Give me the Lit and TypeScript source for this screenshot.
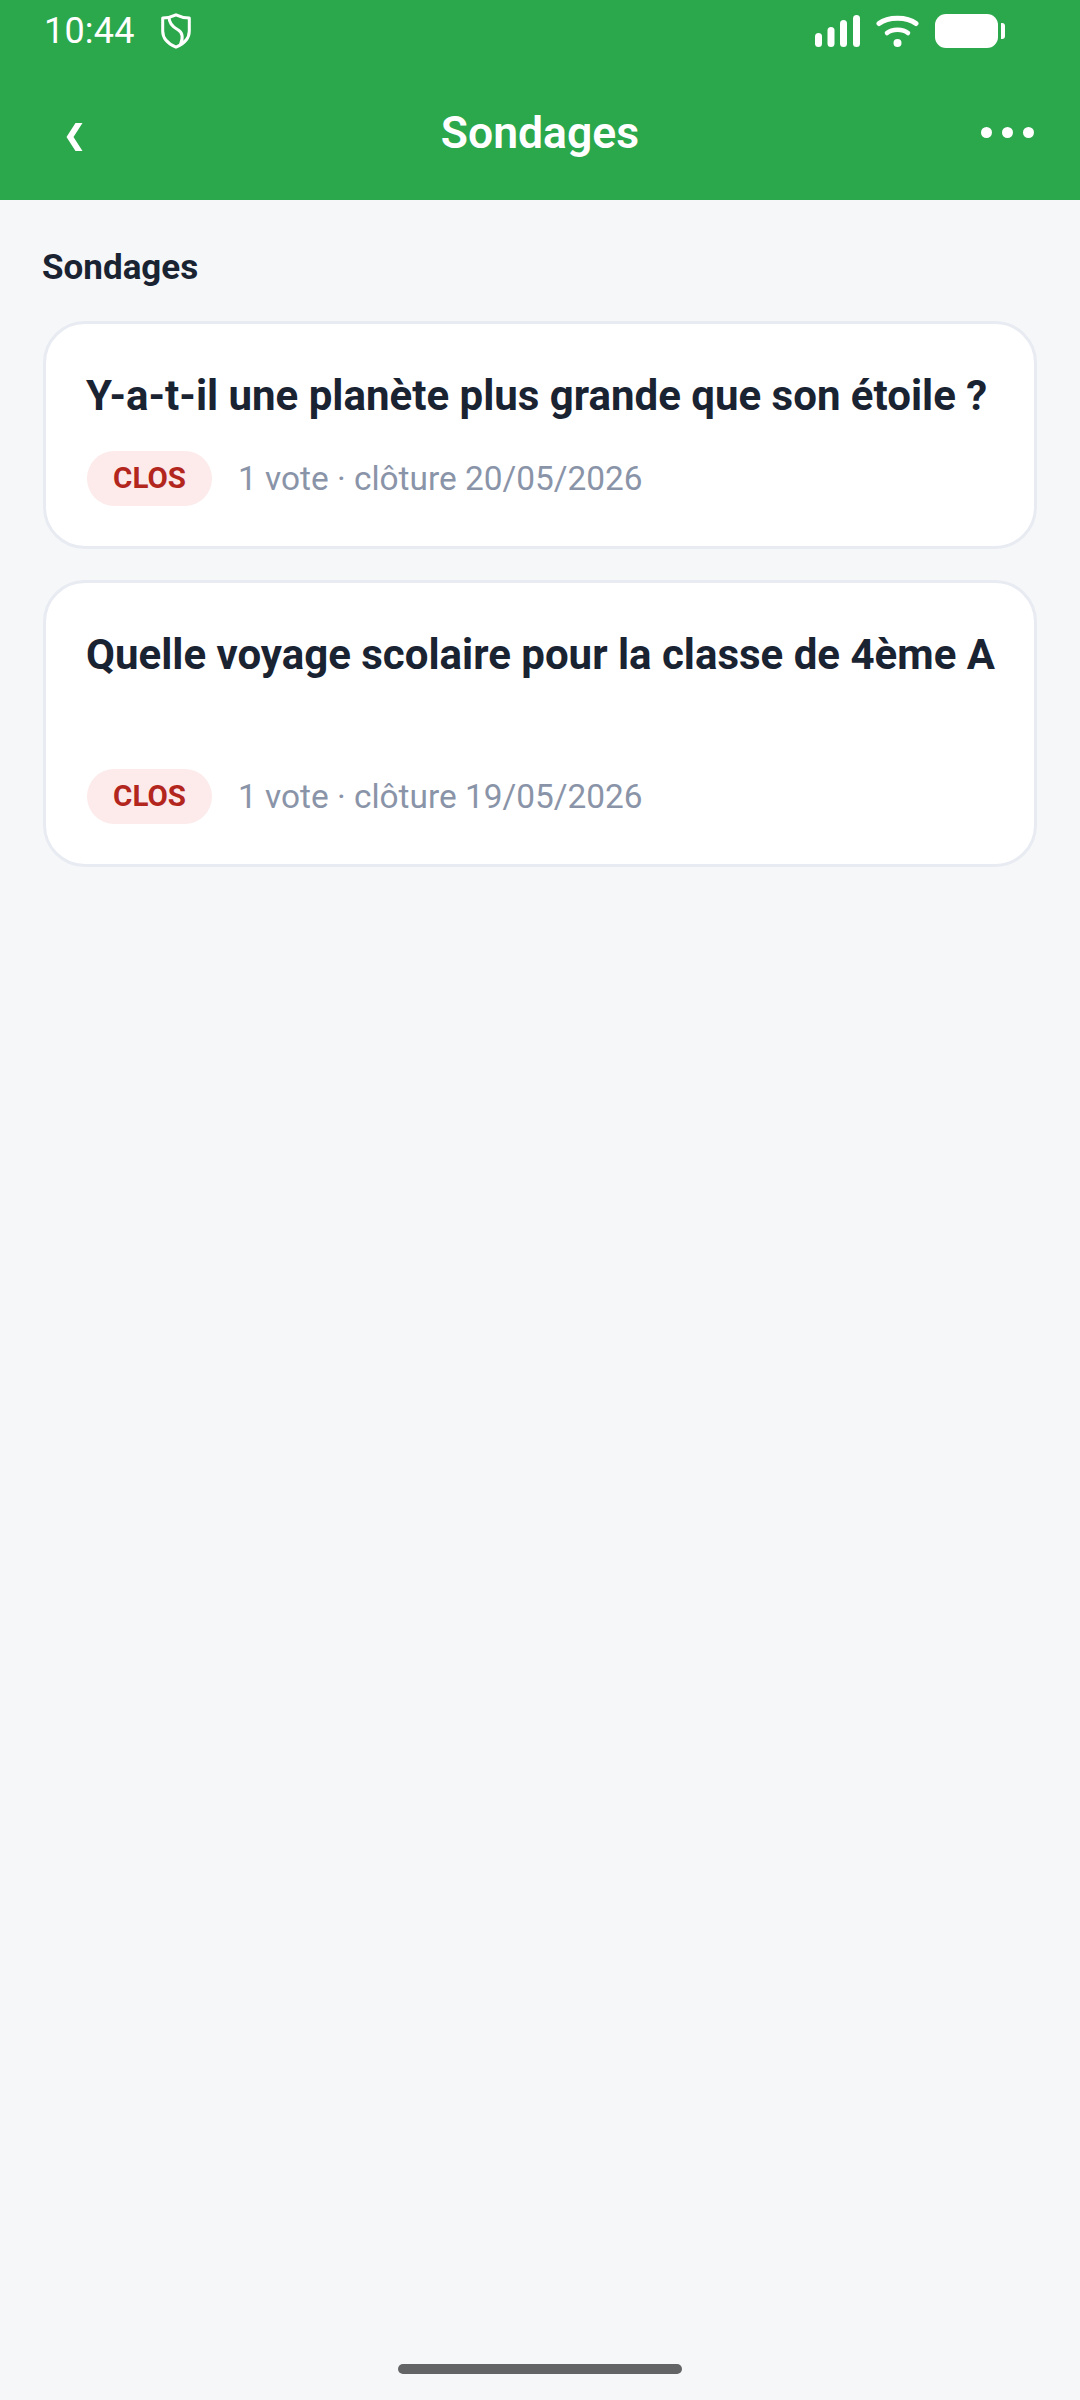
import { LitElement, html, css, svg } from "lit";
import { customElement } from "lit/decorators.js";

const polls = [
  { title: "Y-a-t-il une planète plus grande que son étoile ?", meta: "1 vote · clôture 20/05/2026", tall: false },
  { title: "Quelle voyage scolaire pour la classe de 4ème A", meta: "1 vote · clôture 19/05/2026", tall: true },
];

@customElement("app-root")
export class AppRoot extends LitElement {
  static styles = css`
    :host {
      display: block;
      width: 1080px;
      height: 2400px;
      background: #f6f7f9;
      font-family: Roboto, "Liberation Sans", sans-serif;
      color: #1a2332;
    }
    .page { display: flex; flex-direction: column; height: 2400px; position: relative; }
    .header { background: #2ca84c; height: 200px; color: #fff; display: flex; flex-direction: column; flex: none; }
    .status { height: 62px; display: flex; align-items: center; padding: 0 75px 0 44px; }
    .time { font-size: 36px; line-height: 62px; width: 117px; letter-spacing: 0.2px; }
    .shield { display: block; }
    .spacer { flex: 1; }
    .sig { display: block; margin-right: 16px; }
    .wifi { display: block; margin-right: 16px; }
    .nav { flex: 1; display: grid; grid-template-columns: 1fr auto 1fr; align-items: center; padding: 0 46px; }
    .back { display: block; margin: 12px 0 0 20px; }
    .title { font-size: 44.5px; font-weight: 600; line-height: 56px; margin-top: 4px; }
    .dots { justify-self: end; display: flex; gap: 10px; margin-top: 3px; }
    .dot { width: 11px; height: 11px; border-radius: 50%; background: #fff; }
    .content { padding: 43px 43px 0 42px; display: flex; flex-direction: column; }
    .section { font-size: 35px; font-weight: 700; line-height: 50px; margin: 0 0 28px; }
    .cards { display: flex; flex-direction: column; gap: 31px; padding-left: 1px; }
    .card { background: #fff; border: 3px solid #e8ebf2; border-radius: 42px; padding: 42px 40px 40px 40px; }
    .card-title { font-size: 42px; font-weight: 700; line-height: 59px; white-space: nowrap; }
    .card-title.tall { height: 118px; }
    .meta { display: flex; align-items: center; margin-top: 25px; gap: 26px; padding-left: 1px; }
    .badge { background: #fdeaea; color: #b3261e; font-size: 29.5px; font-weight: 700; height: 55px; width: 125px; border-radius: 28px; display: flex; align-items: center; justify-content: center; }
    .info { font-size: 33.4px; color: #8a94a8; line-height: 55px; padding-top: 1px; }
    .home { position: absolute; left: 398px; top: 2364px; width: 284px; height: 10px; border-radius: 5px; background: #636466; }
  `;

  render() {
    return html`<div class="page">
      <div class="header">
        <div class="status">
          <span class="time">10:44</span>
          <svg class="shield" width="30" height="36" viewBox="0 0 30 36" fill="none" stroke="#fff" stroke-width="3">
            <path d="M15 1.800 C19 3.800 23.500 4.800 28.300 5 V18 C28.300 25.500 22.500 31 15 34.200 C7.500 31 1.700 25.500 1.700 18 V5 C6.500 4.800 11 3.800 15 1.800 Z" stroke-linejoin="round"/>
            <path d="M8 4 C8 11 12 14 16.500 16.500 C21 19 23 23 19.500 31.500" />
          </svg>
          <span class="spacer"></span>
          <svg class="sig" width="45" height="32" viewBox="0 0 45 32" fill="#fff">
            ${[[0, 18, 14], [12.500, 12, 20], [25, 5, 27], [38, 0, 32]].map(([x, y, h]) => svg`<rect x=${x} y=${y} width="7" height=${h} rx="3.500"/>`)}
          </svg>
          <svg class="wifi" width="43" height="32" viewBox="0 0 43 32" fill="none" stroke="#fff" stroke-linecap="round">
            <path d="M3 8.500 C12 1.500 31 1.500 40 8.500" stroke-width="5"/>
            <path d="M11 18 C16 13.500 27 13.500 32 18" stroke-width="4.500"/>
            <circle cx="21.500" cy="28" r="4" fill="#fff" stroke="none"/>
          </svg>
          <svg width="70" height="34" viewBox="0 0 70 34" fill="#fff">
            <rect x="0" y="0" width="63" height="34" rx="11"/>
            <path d="M66 9 H67 A3 3 0 0 1 70 12 V22 A3 3 0 0 1 67 25 H66 Z"/>
          </svg>
        </div>
        <div class="nav">
          <svg class="back" width="17" height="28" viewBox="0 0 17 28" fill="#fff">
            <path d="M9.500 0 H16.500 L7.500 14 L16.500 28 H9.500 L0.500 14 Z"/>
          </svg>
          <span class="title">Sondages</span>
          <div class="dots"><span class="dot"></span><span class="dot"></span><span class="dot"></span></div>
        </div>
      </div>
      <div class="content">
        <div class="section">Sondages</div>
        <div class="cards">
          ${polls.map((p) => html`<div class="card">
            <div class="card-title ${p.tall ? "tall" : ""}">${p.title}</div>
            <div class="meta"><span class="badge">CLOS</span><span class="info">${p.meta}</span></div>
          </div>`)}
        </div>
      </div>
      <div class="home"></div>
    </div>`;
  }
}
